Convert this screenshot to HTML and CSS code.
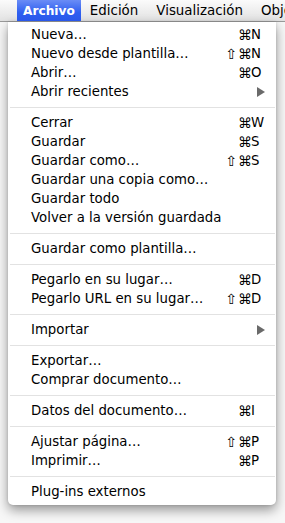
FILE: index.html
```html
<!DOCTYPE html>
<html lang="es">
<head>
<meta charset="utf-8">
<link rel="stylesheet" href="styles.css">
</head>
<body>
<div class="menubar">
  <span class="mb-item active">Archivo</span>
  <span class="mb-item">Edición</span>
  <span class="mb-item">Visualización</span>
  <span class="mb-item">Objeto</span>
</div>
<div class="menu">
  <div class="row"><span class="label">Nueva…</span><span class="cmd">⌘</span><span class="key">N</span></div>
  <div class="row"><span class="label">Nuevo desde plantilla…</span><span class="shift">⇧</span><span class="cmd">⌘</span><span class="key">N</span></div>
  <div class="row"><span class="label">Abrir…</span><span class="cmd">⌘</span><span class="key">O</span></div>
  <div class="row"><span class="label">Abrir recientes</span><span class="arrow"></span></div>
  <div class="sep"></div>
  <div class="row"><span class="label">Cerrar</span><span class="cmd">⌘</span><span class="key">W</span></div>
  <div class="row"><span class="label">Guardar</span><span class="cmd">⌘</span><span class="key">S</span></div>
  <div class="row"><span class="label">Guardar como…</span><span class="shift">⇧</span><span class="cmd">⌘</span><span class="key">S</span></div>
  <div class="row"><span class="label">Guardar una copia como…</span></div>
  <div class="row"><span class="label">Guardar todo</span></div>
  <div class="row"><span class="label">Volver a la versión guardada</span></div>
  <div class="sep"></div>
  <div class="row"><span class="label">Guardar como plantilla…</span></div>
  <div class="sep"></div>
  <div class="row"><span class="label">Pegarlo en su lugar…</span><span class="cmd">⌘</span><span class="key">D</span></div>
  <div class="row"><span class="label">Pegarlo URL en su lugar…</span><span class="shift">⇧</span><span class="cmd">⌘</span><span class="key">D</span></div>
  <div class="sep"></div>
  <div class="row"><span class="label">Importar</span><span class="arrow"></span></div>
  <div class="sep"></div>
  <div class="row"><span class="label">Exportar…</span></div>
  <div class="row"><span class="label">Comprar documento…</span></div>
  <div class="sep"></div>
  <div class="row"><span class="label">Datos del documento…</span><span class="cmd">⌘</span><span class="key">I</span></div>
  <div class="sep"></div>
  <div class="row"><span class="label">Ajustar página…</span><span class="shift">⇧</span><span class="cmd">⌘</span><span class="key">P</span></div>
  <div class="row"><span class="label">Imprimir…</span><span class="cmd">⌘</span><span class="key">P</span></div>
  <div class="sep"></div>
  <div class="row"><span class="label">Plug-ins externos</span></div>
</div>
</body>
</html>
```

FILE: styles.css
```css
html, body {
  margin: 0;
  padding: 0;
}
body {
  background: #f7f7f7;
  font-family: "DejaVu Sans", "Liberation Sans", sans-serif;
  font-size: 13.3px;
  color: #000;
  overflow: hidden;
  width: 285px;
  height: 523px;
}
.menubar {
  height: 21px;
  border-bottom: 1px solid #9a9a9a;
  background: linear-gradient(#fbfbfb, #e2e2e2);
  display: flex;
  align-items: stretch;
  padding-left: 17px;
  white-space: nowrap;
  overflow: hidden;
  font-size: 13.4px;
}
.mb-item {
  display: flex;
  align-items: center;
  padding: 0 9px 0 9px;
}
.mb-item.active {
  background: linear-gradient(#6a8cf6, #2e5ff0 60%, #2a58ea);
  color: #fff;
  font-weight: bold;
  font-size: 12.2px;
  padding: 0 6px 0 6px;
}
.menu {
  margin-left: 8px;
  width: 268px;
  background: #fff;
  border-radius: 0 0 5px 5px;
  padding: 3px 0 4px;
  box-shadow: 0 5px 12px rgba(0, 0, 0, 0.4), 0 0 3px rgba(0, 0, 0, 0.15);
}
.row {
  display: grid;
  grid-template-columns: 1fr 14px 13px 15px;
  align-items: center;
  height: 19px;
  padding: 0 10px 0 23px;
  white-space: nowrap;
}
.label {
  grid-column: 1;
}
.shift {
  grid-column: 2;
  text-align: center;
  font-size: 14px;
}
.cmd {
  grid-column: 3;
  text-align: center;
  font-size: 14px;
}
.key {
  grid-column: 4;
}
.arrow {
  grid-column: 4;
  justify-self: end;
  width: 0;
  height: 0;
  border-top: 5px solid transparent;
  border-bottom: 5px solid transparent;
  border-left: 8px solid #6a6a6a;
  margin-right: 1px;
}
.sep {
  height: 1px;
  background: #e2e2e2;
  margin: 6px 1px 5px 2px;
}
```
